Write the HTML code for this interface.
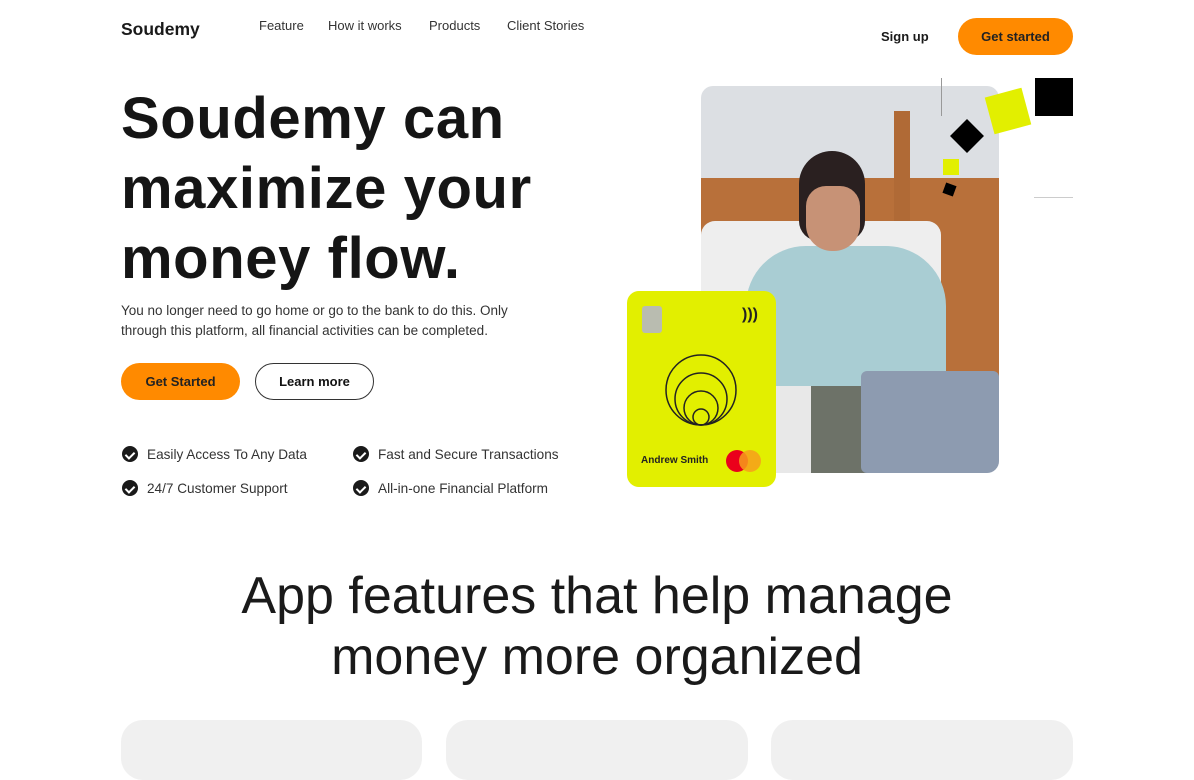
<!DOCTYPE html>
<html><head><meta charset="utf-8"><style>
*{margin:0;padding:0;box-sizing:border-box}
body{width:1194px;height:744px;overflow:hidden;background:#fff;font-family:"Liberation Sans",sans-serif;color:#1a1a1a;position:relative}
.a{position:absolute}
.nav{font-size:13px;color:#333;top:18px}
.btn{position:absolute;border-radius:20px;font-weight:bold;font-size:13px;display:flex;align-items:center;justify-content:center}
h1{position:absolute;left:121px;top:84px;font-size:58px;line-height:70px;font-weight:bold;color:#151515;letter-spacing:0.6px}
.p{left:121px;top:301px;font-size:13.5px;line-height:20px;color:#333}
.chk{position:absolute;font-size:13.6px;color:#333;display:flex;align-items:center;gap:9px}
.chk i{width:16px;height:16px;border-radius:50%;background:#1a1a1a;display:inline-block;position:relative}
.chk i:after{content:"";position:absolute;left:4.5px;top:3.5px;width:4px;height:7px;border:solid #fff;border-width:0 2px 2px 0;transform:rotate(45deg)}
h2{position:absolute;left:0;width:1194px;top:566px;text-align:center;font-size:52px;font-weight:normal;line-height:61px;color:#1a1a1a}
.card{position:absolute;top:720px;height:60px;background:#f0f0f0;border-radius:22px}
</style></head><body>
<div class="a" style="left:121px;top:19px;font-size:17.5px;font-weight:bold">Soudemy</div>
<div class="a nav" style="left:259px">Feature</div>
<div class="a nav" style="left:328px">How it works</div>
<div class="a nav" style="left:429px">Products</div>
<div class="a nav" style="left:507px">Client Stories</div>
<div class="a" style="left:881px;top:29px;font-size:13px;font-weight:bold">Sign up</div>
<div class="btn" style="left:958px;top:18px;width:115px;height:37px;background:#ff8a00;color:#222">Get started</div>
<h1>Soudemy can<br>maximize your<br>money flow.</h1>
<div class="a p">You no longer need to go home or go to the bank to do this. Only<br>through this platform, all financial activities can be completed.</div>
<div class="btn" style="left:121px;top:363px;width:119px;height:37px;background:#ff8a00;color:#222">Get Started</div>
<div class="btn" style="left:255px;top:363px;width:119px;height:37px;border:1.5px solid #333;background:#fff;color:#111">Learn more</div>
<div class="chk" style="left:122px;top:446px"><i></i>Easily Access To Any Data</div>
<div class="chk" style="left:353px;top:446px"><i></i>Fast and Secure Transactions</div>
<div class="chk" style="left:122px;top:480px"><i></i>24/7 Customer Support</div>
<div class="chk" style="left:353px;top:480px"><i></i>All-in-one Financial Platform</div>

<div class="a" style="left:701px;top:86px;width:298px;height:387px;border-radius:12px;overflow:hidden;background:#dcdfe3">
 <div class="a" style="left:0;top:92px;width:298px;height:200px;background:#b8703a"></div>
 <div class="a" style="left:193px;top:25px;width:16px;height:120px;background:#b06a36"></div>
 <div class="a" style="left:0;top:135px;width:240px;height:120px;background:#eeeeee;border-radius:14px"></div>
 <div class="a" style="left:45px;top:160px;width:200px;height:160px;background:#a9cdd3;border-radius:60px 60px 20px 20px"></div>
 <div class="a" style="left:98px;top:65px;width:66px;height:90px;background:#2a2020;border-radius:33px 33px 20px 20px"></div>
 <div class="a" style="left:105px;top:100px;width:54px;height:65px;background:#c79276;border-radius:20px 20px 26px 26px"></div>
 <div class="a" style="left:110px;top:300px;width:100px;height:87px;background:#6d7268"></div>
 <div class="a" style="left:160px;top:285px;width:138px;height:102px;background:#8d9bb0;border-radius:6px"></div>
 <div class="a" style="left:0;top:300px;width:110px;height:87px;background:#e8e8e8"></div>
</div>
<div class="a" style="left:941px;top:78px;width:1px;height:38px;background:#999"></div>
<div class="a" style="left:1034px;top:197px;width:39px;height:1px;background:#ccc"></div>
<div class="a" style="left:1035px;top:78px;width:38px;height:38px;background:#000"></div>
<div class="a" style="left:989px;top:92px;width:38px;height:38px;background:#e2ef00;transform:rotate(-15deg)"></div>
<div class="a" style="left:955px;top:124px;width:24px;height:24px;background:#000;transform:rotate(45deg)"></div>
<div class="a" style="left:943px;top:159px;width:16px;height:16px;background:#e2ef00"></div>
<div class="a" style="left:944px;top:184px;width:11px;height:11px;background:#000;transform:rotate(20deg)"></div>

<div class="a" style="left:627px;top:291px;width:149px;height:196px;border-radius:12px;background:#e2ef00">
 <div class="a" style="left:15px;top:15px;width:20px;height:27px;border-radius:3px;background:#b9bcb0"></div>
 <div class="a" style="left:115px;top:15px;font-size:16px;font-weight:bold;color:#222">)))</div>
 <svg class="a" style="left:37px;top:62px" width="75" height="75" viewBox="0 0 75 75" fill="none" stroke="#222" stroke-width="1.5">
  <circle cx="37" cy="37" r="35"/><circle cx="37" cy="46" r="26"/><circle cx="37" cy="55" r="17"/><circle cx="37" cy="64" r="8"/></svg>
 <div class="a" style="left:14px;top:164px;font-size:10px;font-weight:bold;color:#222">Andrew Smith</div>
 <div class="a" style="left:99px;top:159px;width:22px;height:22px;border-radius:50%;background:#eb001b"></div>
 <div class="a" style="left:112px;top:159px;width:22px;height:22px;border-radius:50%;background:#f79e1b;opacity:.85"></div>
</div>

<h2>App features that help manage<br>money more organized</h2>
<div class="card" style="left:121px;width:301px"></div>
<div class="card" style="left:446px;width:302px"></div>
<div class="card" style="left:771px;width:302px"></div>
</body></html>
